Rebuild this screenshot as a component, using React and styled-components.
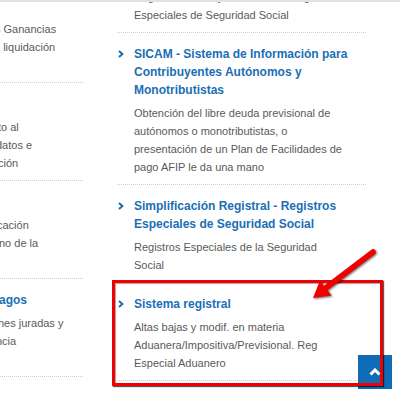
import React from "react";
import styled, { createGlobalStyle } from "styled-components";

const GlobalStyle = createGlobalStyle`
  html, body { margin: 0; padding: 0; background: #fff; overflow: hidden; }
  body { font-family: "Liberation Sans", Arial, Helvetica, sans-serif; }
`;

const Page = styled.div`
  position: relative;
  width: 400px;
  height: 400px;
  overflow: hidden;
  background: #fff;
`;

const TopEdge = styled.div`
  position: relative;
  z-index: 1;
  height: 2px;
  background: #e1e1e1;
`;

const Columns = styled.div`
  display: flex;
  align-items: flex-start;
  gap: 34px;
  margin-top: -49px;
`;

const LeftColumn = styled.div`
  flex: none;
  width: 83px;
  padding-top: 32px;
  overflow: hidden;
`;

const RightColumn = styled.div`
  flex: none;
  width: 249px;
`;

const Item = styled.div`
  padding: 12px ${(p) => (p.$right ? "17.5px" : "0")} 8px 0;
  border-bottom: 1px dotted #cfcfcf;
`;

const TitleRow = styled.div`
  display: flex;
  align-items: flex-start;
`;

const ChevronBox = styled.span`
  flex: none;
  width: 17px;
  height: 18px;
  display: flex;
  align-items: center;
  padding-left: 1px;
  box-sizing: border-box;
`;

const Title = styled.div`
  font-size: 12px;
  font-weight: 700;
  line-height: 18px;
  color: #1a6fb5;
`;

const Desc = styled.div`
  margin-top: 5px;
  margin-left: ${(p) => (p.$indent ? "17px" : "0")};
  font-size: 11px;
  line-height: 18px;
  color: #5a5a5a;
`;

const Line = styled.span`
  display: block;
  white-space: nowrap;
  margin-left: ${(p) => -(p.$cut || 0)}px;
`;

const NoBreak = styled.span`
  white-space: nowrap;
`;

const Highlight = styled.div`
  position: absolute;
  z-index: 3;
  left: 112px;
  top: 280px;
  width: 271px;
  height: 106px;
  box-sizing: border-box;
  border: 3px solid #f20000;
  box-shadow: 1px 1px 1px rgba(0, 0, 0, 0.65), inset 1px 1px 1px rgba(0, 0, 0, 0.35);
  pointer-events: none;
`;

const Arrow = styled.svg`
  position: absolute;
  z-index: 4;
  left: 300px;
  top: 240px;
  filter: drop-shadow(1px 1.5px 1px rgba(0, 0, 0, 0.6));
`;

const ScrollTop = styled.button`
  position: absolute;
  z-index: 2;
  left: 358px;
  top: 355px;
  width: 34px;
  height: 34px;
  padding: 0;
  border: 0;
  background: #0f6cb6;
  display: flex;
  align-items: center;
  justify-content: center;
`;

const Chevron = () => (
  <ChevronBox>
    <svg width="6" height="8" viewBox="0 0 6 8">
      <polyline points="1,1 4.4,4 1,7" fill="none" stroke="#1a6fb5" strokeWidth="2" />
    </svg>
  </ChevronBox>
);

const NBSP = "\u00a0";

const leftItems = [
  { title: { t: NBSP }, lines: [{ t: "s Ganancias", cut: 5 }, { t: "a liquidación", cut: 6 }, { t: NBSP }] },
  { title: { t: NBSP }, lines: [{ t: "to al", cut: 2 }, { t: "datos e", cut: 4 }, { t: "ción", cut: 2 }] },
  { title: { t: NBSP }, lines: [{ t: "cación", cut: 3 }, { t: "no de la", cut: 1 }, { t: NBSP }] },
  { title: { t: "agos", cut: 1 }, lines: [{ t: "nes juradas y", cut: 2 }, { t: "ncia", cut: 4 }, { t: NBSP }] },
];

export default function App() {
  return (
    <Page>
      <GlobalStyle />
      <TopEdge />
      <Columns>
        <LeftColumn>
          {leftItems.map((it, i) => (
            <Item key={i}>
              <Title>
                <Line $cut={it.title.cut}>{it.title.t}</Line>
              </Title>
              <Desc>
                {it.lines.map((l, j) => (
                  <Line key={j} $cut={l.cut}>{l.t}</Line>
                ))}
              </Desc>
            </Item>
          ))}
        </LeftColumn>
        <RightColumn>
          <Item $right>
            <TitleRow>
              <Chevron />
              <Title>Registro de trabajadores</Title>
            </TitleRow>
            <Desc $indent>
              Registro de trabajadores en los Regímenes Especiales de Seguridad Social
            </Desc>
          </Item>
          <Item $right>
            <TitleRow>
              <Chevron />
              <Title>SICAM - Sistema de Información para Contribuyentes Autónomos y Monotributistas</Title>
            </TitleRow>
            <Desc $indent>
              Obtención del libre deuda previsional de autónomos o monotributistas, o presentación de un Plan de
              Facilidades de pago AFIP le da una mano
            </Desc>
          </Item>
          <Item $right>
            <TitleRow>
              <Chevron />
              <Title>Simplificación Registral - Registros Especiales de Seguridad Social</Title>
            </TitleRow>
            <Desc $indent>Registros Especiales de la Seguridad Social</Desc>
          </Item>
          <Item $right>
            <TitleRow>
              <Chevron />
              <Title>Sistema registral</Title>
            </TitleRow>
            <Desc $indent>
              Altas bajas y modif. en materia <NoBreak>Aduanera/Impositiva/Previsional.</NoBreak> Reg Especial
              Aduanero
            </Desc>
          </Item>
        </RightColumn>
      </Columns>

      <ScrollTop aria-label="Volver arriba">
        <svg width="12" height="8" viewBox="0 0 12 8">
          <polyline points="1.5,6.5 6,2 10.5,6.5" fill="none" stroke="#fff" strokeWidth="3" />
        </svg>
      </ScrollTop>

      <Highlight />

      <Arrow width="90" height="70" viewBox="0 0 90 70">
        <line x1="73" y1="12" x2="27" y2="47" stroke="#f20000" strokeWidth="5.5" strokeLinecap="round" />
        <polygon points="13,58 31.5,55.5 20,40.5" fill="#f20000" />
      </Arrow>
    </Page>
  );
}
